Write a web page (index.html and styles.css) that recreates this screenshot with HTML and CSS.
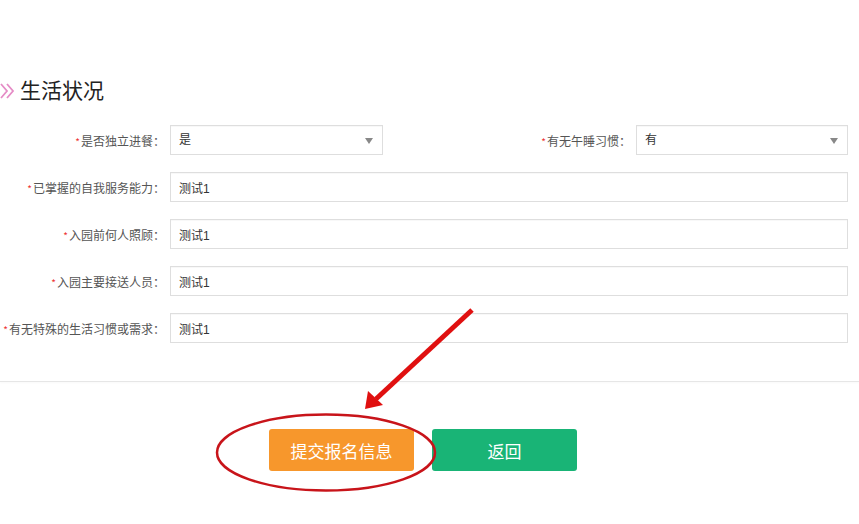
FILE: index.html
```html
<!DOCTYPE html>
<html lang="zh-CN">
  <head>
    <meta charset="UTF-8" />
    <title>生活状况</title>
    <link rel="stylesheet" href="styles.css">
  </head>
  <body>
    <div class="page">
      <h2 class="section-title">
        <svg class="title-icon" width="15" height="18" viewBox="0 0 15 18">
          <polyline points="1,2 7,9 1,16" />
          <polyline points="7,2 13,9 7,16" />
        </svg>
        生活状况
      </h2>

      <div class="form">
        <div class="form-row form-row-split">
          <label class="form-label"><i>*</i>是否独立进餐：</label>
          <div class="select-box">是</div>
          <label class="form-label"><i>*</i>有无午睡习惯：</label>
          <div class="select-box">有</div>
        </div>
        <div class="form-row">
          <label class="form-label"><i>*</i>已掌握的自我服务能力：</label>
          <input class="text-input" type="text" value="测试1" />
        </div>
        <div class="form-row">
          <label class="form-label"><i>*</i>入园前何人照顾：</label>
          <input class="text-input" type="text" value="测试1" />
        </div>
        <div class="form-row">
          <label class="form-label"><i>*</i>入园主要接送人员：</label>
          <input class="text-input" type="text" value="测试1" />
        </div>
        <div class="form-row">
          <label class="form-label"><i>*</i>有无特殊的生活习惯或需求：</label>
          <input class="text-input" type="text" value="测试1" />
        </div>
      </div>

      <div class="divider"></div>

      <div class="actions">
        <button class="btn btn-submit">提交报名信息</button>
        <button class="btn btn-back">返回</button>
      </div>
    </div>

    <!-- 标注：箭头和圈 -->
    <svg class="annotation" width="859" height="524" viewBox="0 0 859 524">
      <line x1="472" y1="310" x2="376" y2="399" class="mark-line" />
      <polygon points="365,409 368,391 383,405" class="mark-head" />
      <ellipse cx="326" cy="452.5" rx="109" ry="38" class="mark-circle" />
    </svg>
  </body>
</html>
```

FILE: styles.css
```css
body {
  margin: 0;
  font-family: "Liberation Sans", "Noto Sans CJK SC", sans-serif;
  background-color: #fff;
  color: #333;
}

.page {
  width: 846px;
}

.section-title {
  display: flex;
  align-items: center;
  gap: 5px;
  margin: 0;
  padding-top: 79px;
  height: 24px;
  line-height: 24px;
  font-size: 21px;
  font-weight: normal;
  color: #222;
}

.title-icon polyline {
  fill: none;
  stroke: #e58cc6;
  stroke-width: 1.8;
}

.form {
  margin-top: 22px;
  display: flex;
  flex-direction: column;
  gap: 17px;
  width: 848px;
}

.form-row {
  display: grid;
  grid-template-columns: 165px 1fr;
  column-gap: 5px;
  height: 30px;
  align-items: center;
}

.form-row-split {
  grid-template-columns: 165px 213px 243px 212px;
}

.form-label {
  text-align: right;
  font-family: "Noto Sans CJK SC", sans-serif;
  font-size: 12px;
  color: #555;
  white-space: nowrap;
}

.form-label i {
  font-style: normal;
  color: #e33;
  font-size: 10px;
  margin-right: 1px;
}

.select-box,
.text-input {
  box-sizing: border-box;
  height: 30px;
  border: 1px solid #dedede;
  background-color: #fff;
  padding: 0 8px;
  font-family: inherit;
  font-size: 12px;
  color: #333;
  line-height: 28px;
  box-shadow: inset 0 1px 1px rgba(0, 0, 0, 0.03);
}

.text-input {
  width: 100%;
  outline: none;
}

.select-box {
  position: relative;
}

.select-box::after {
  content: "";
  position: absolute;
  right: 9px;
  top: 12px;
  border-left: 4px solid transparent;
  border-right: 4px solid transparent;
  border-top: 6px solid #888;
}

.divider {
  margin-top: 38px;
  border-top: 1px solid #e6e6e6;
  box-shadow: 0 1px 2px rgba(0, 0, 0, 0.04);
  width: 859px;
}

.actions {
  margin-top: 47px;
  display: flex;
  justify-content: center;
  gap: 18px;
}

.btn {
  width: 145px;
  height: 42px;
  border: none;
  border-radius: 3px;
  color: #fff;
  font-family: inherit;
  font-size: 17px;
  cursor: pointer;
}

.btn-submit {
  background-color: #f7972c;
}

.btn-back {
  background-color: #19b476;
}

.annotation {
  position: absolute;
  left: 0;
  top: 0;
  pointer-events: none;
}

.mark-line {
  stroke: #e01010;
  stroke-width: 5;
}

.mark-head {
  fill: #e01010;
}

.mark-circle {
  fill: none;
  stroke: #c8141a;
  stroke-width: 2.5;
}
```
